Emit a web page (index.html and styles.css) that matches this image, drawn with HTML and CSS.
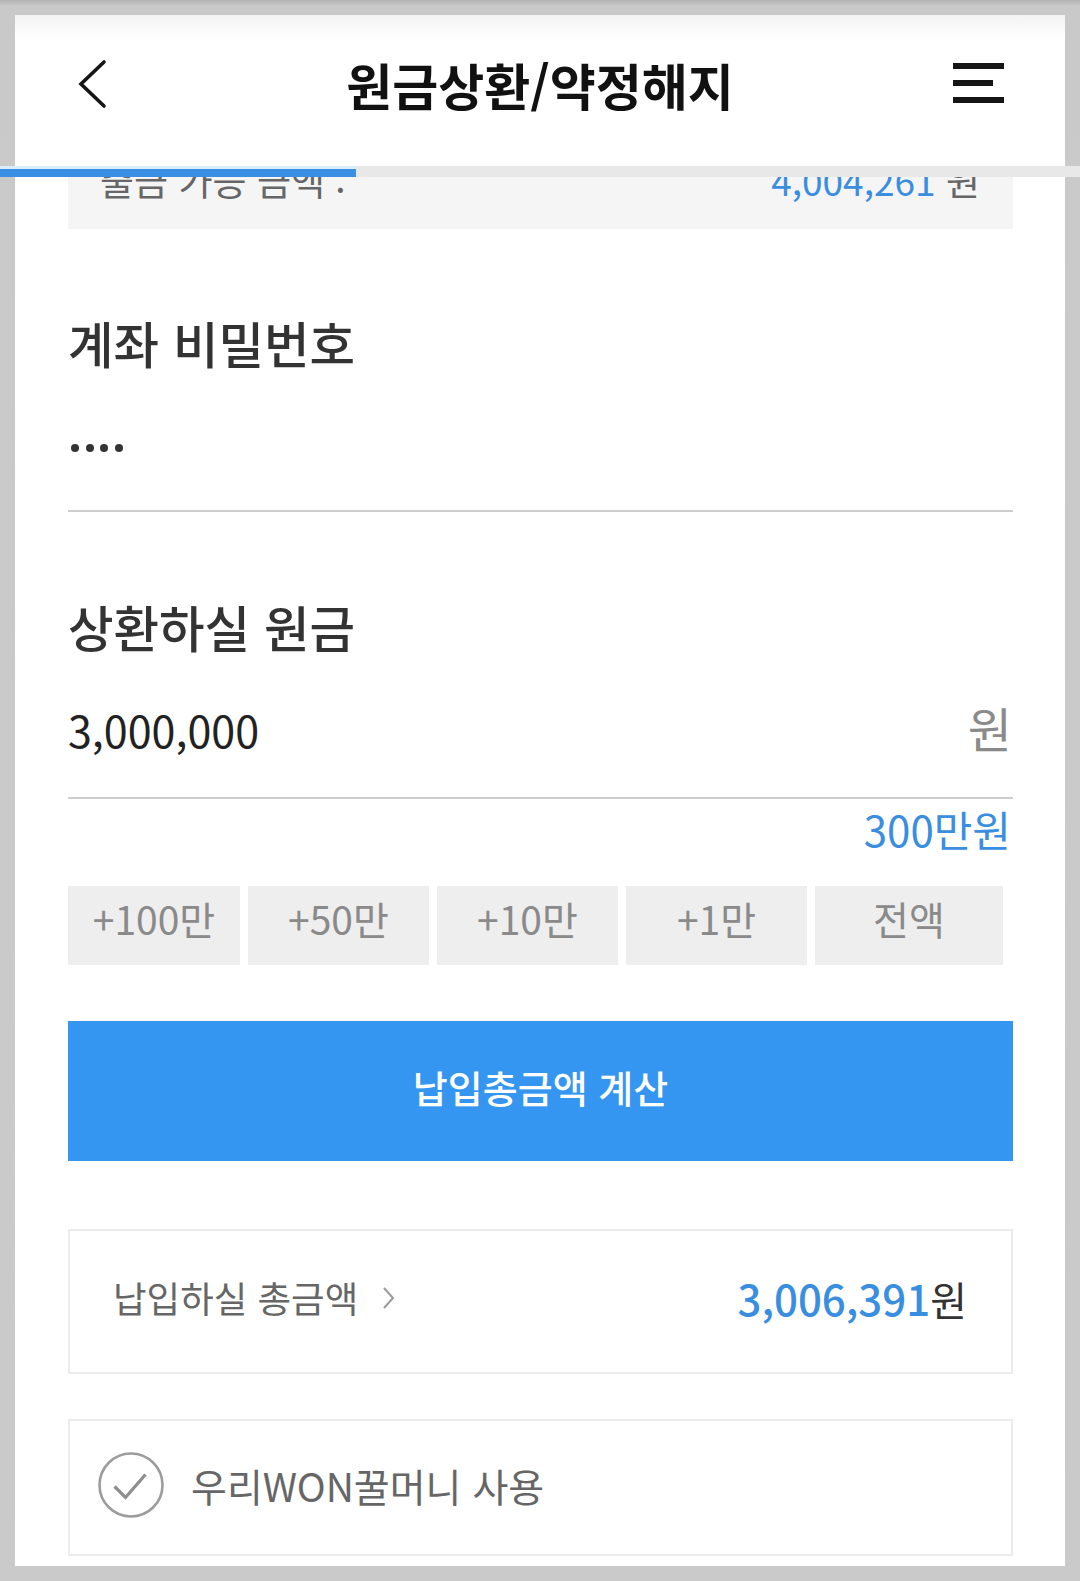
FILE: index.html
```html
<!DOCTYPE html>
<html lang="ko">
<head>
  <meta charset="UTF-8">
  <meta name="viewport" content="width=device-width, initial-scale=1.0">
  <title>원금상환/약정해지</title>
  <link rel="stylesheet" href="styles.css">
</head>
<body>
  <div class="progress"><div class="progress-fill"></div></div>

  <div class="screen">
    <header class="appbar">
      <div class="appbar-side">
        <svg class="back" width="30" height="50" viewBox="0 0 30 50">
          <path d="M26 3 L3 25 L26 47" fill="none" stroke="#151515" stroke-width="3.6" stroke-linecap="round" stroke-linejoin="miter"/>
        </svg>
      </div>
      <h1 class="appbar-title">원금상환/약정해지</h1>
      <div class="appbar-side appbar-side-right">
        <svg class="menu" width="52" height="42" viewBox="0 0 52 42">
          <rect x="0" y="0" width="51" height="6" fill="#151515"/>
          <rect x="0" y="17" width="40" height="6" fill="#151515"/>
          <rect x="0" y="34" width="51" height="6" fill="#151515"/>
        </svg>
      </div>
    </header>

    <main class="content">
      <div class="avail">
        <span class="avail-label">출금 가능 금액 :</span>
        <span class="avail-value"><em>4,004,261</em> 원</span>
      </div>

      <section class="field field-pw">
        <h2 class="field-label">계좌 비밀번호</h2>
        <div class="pw">
          <span class="dot"></span><span class="dot"></span><span class="dot"></span><span class="dot"></span>
        </div>
      </section>

      <section class="field field-amount">
        <h2 class="field-label">상환하실 원금</h2>
        <div class="amount">
          <span class="amount-value">3,000,000</span>
          <span class="amount-unit">원</span>
        </div>
        <div class="amount-hint">300만원</div>
        <div class="quick">
          <button type="button">+100만</button>
          <button type="button">+50만</button>
          <button type="button">+10만</button>
          <button type="button">+1만</button>
          <button type="button">전액</button>
        </div>
      </section>

      <button type="button" class="calc">납입총금액 계산</button>

      <div class="total">
        <div class="total-label">
          납입하실 총금액
          <svg class="total-arrow" width="18" height="24" viewBox="0 0 18 24">
            <path d="M4 2 L13 12 L4 22" fill="none" stroke="#9a9a9a" stroke-width="2"/>
          </svg>
        </div>
        <div class="total-value"><em>3,006,391</em>원</div>
      </div>

      <label class="point">
        <svg class="check" width="68" height="68" viewBox="0 0 68 68">
          <circle cx="34" cy="34" r="31.5" fill="none" stroke="#9c9c9c" stroke-width="2.6"/>
          <path d="M17.5 35.5 L28.5 46.5 L48.5 23.5" fill="none" stroke="#8e8e8e" stroke-width="3.2"/>
        </svg>
        <span class="point-text">우리WON꿀머니 사용</span>
      </label>
    </main>
  </div>
</body>
</html>
```

FILE: styles.css
```css
body {
  margin: 0;
  padding: 15px;
  background: linear-gradient(#b2b2b2 0, #c9c9c9 6px, #cacaca 100%);
  font-family: "Noto Sans CJK KR", "Noto Sans", sans-serif;
}
.progress {
  position: absolute;
  top: 166px;
  left: 0;
  width: 1080px;
  height: 11px;
  background: #e8e8e8;
  z-index: 2;
}
.progress-fill {
  width: 356px;
  height: 8px;
  border-top: 3px solid #d8eef9;
  background: #3a8fe3;
}
.screen {
  background: #fff;
  height: 1551px;
  overflow: hidden;
}
.appbar {
  height: 151px;
  box-sizing: border-box;
  padding-bottom: 13px;
  display: flex;
  align-items: center;
  background: linear-gradient(#f2f2f2 0, #fff 24px);
}
.appbar-side {
  width: 120px;
  display: flex;
}
.back {
  margin-left: 63px;
}
.appbar-side-right {
  justify-content: flex-end;
}
.menu {
  margin-right: 60px;
}
.appbar-title {
  flex: 1;
  margin: 0;
  text-align: center;
  font-size: 50px;
  line-height: 56px;
  font-weight: 700;
  color: #111;
}
.content {
  overflow: hidden;
  padding: 0 52px 0 53px;
}
.avail {
  height: 100px;
  margin-top: -37px;
  box-sizing: border-box;
  padding: 0 33px 32px 32px;
  display: flex;
  justify-content: space-between;
  align-items: flex-end;
  background: #f5f5f5;
  font-size: 37px;
  line-height: 34px;
  color: #666;
}
.avail-value em {
  font-style: normal;
  color: #3a8ee0;
}
.field-label {
  margin: 0;
  font-family: "Noto Sans CJK KR Medium", "Noto Sans CJK KR", sans-serif;
  font-size: 49.5px;
  line-height: 62px;
  font-weight: 500;
  color: #333;
}
.field-pw .field-label {
  margin-top: 83px;
}
.field-amount .field-label {
  margin-top: 84px;
}
.pw {
  height: 124px;
  padding: 12px 0 0 3px;
  display: flex;
  align-items: center;
  gap: 6.5px;
  border-bottom: 2px solid #cdcdcd;
}
.dot {
  width: 8px;
  height: 8px;
  border-radius: 50%;
  background: #333;
}
.amount {
  padding: 40px 1px 39px 0;
  display: flex;
  justify-content: space-between;
  align-items: baseline;
  line-height: 58px;
  border-bottom: 2px solid #cdcdcd;
}
.amount-value {
  font-size: 43px;
  color: #222;
}
.amount-unit {
  font-size: 48px;
  color: #8a8a8a;
}
.amount-hint {
  margin-top: 5px;
  padding-right: 2px;
  text-align: right;
  font-size: 42px;
  line-height: 50px;
  color: #3a8ee0;
}
.quick {
  margin-top: 32px;
  display: grid;
  grid-template-columns: 172px 181px 181px 181px 188px;
  gap: 8px;
}
.quick button {
  height: 79px;
  padding: 0 0 15px;
  border: none;
  background: #eeeeee;
  font-family: inherit;
  font-size: 39px;
  color: #8a8a8a;
}
.calc {
  display: block;
  width: 100%;
  height: 140px;
  margin-top: 56px;
  padding: 0 0 10px;
  border: none;
  background: #3596f2;
  color: #fff;
  font-family: "Noto Sans CJK KR Medium", "Noto Sans CJK KR", sans-serif;
  font-size: 38px;
  font-weight: 700;
}
.total {
  margin-top: 68px;
  height: 145px;
  box-sizing: border-box;
  padding: 0 44px 8px 43px;
  display: flex;
  justify-content: space-between;
  align-items: center;
  border: 2px solid #ebebeb;
}
.total-label {
  display: flex;
  align-items: center;
  font-size: 36.5px;
  color: #666;
}
.total-arrow {
  margin-left: 22px;
}
.total-value {
  font-size: 40px;
  color: #333;
}
.total-value em {
  font-family: "Noto Sans CJK KR Medium", "Noto Sans CJK KR", sans-serif;
  font-style: normal;
  font-size: 42px;
  font-weight: 500;
  color: #3a8ee0;
}
.point {
  margin-top: 45px;
  height: 137px;
  box-sizing: border-box;
  padding: 0 0 6px 27px;
  display: flex;
  align-items: center;
  gap: 26px;
  border: 2px solid #ebebeb;
}
.point-text {
  font-size: 39px;
  color: #666;
}
```
